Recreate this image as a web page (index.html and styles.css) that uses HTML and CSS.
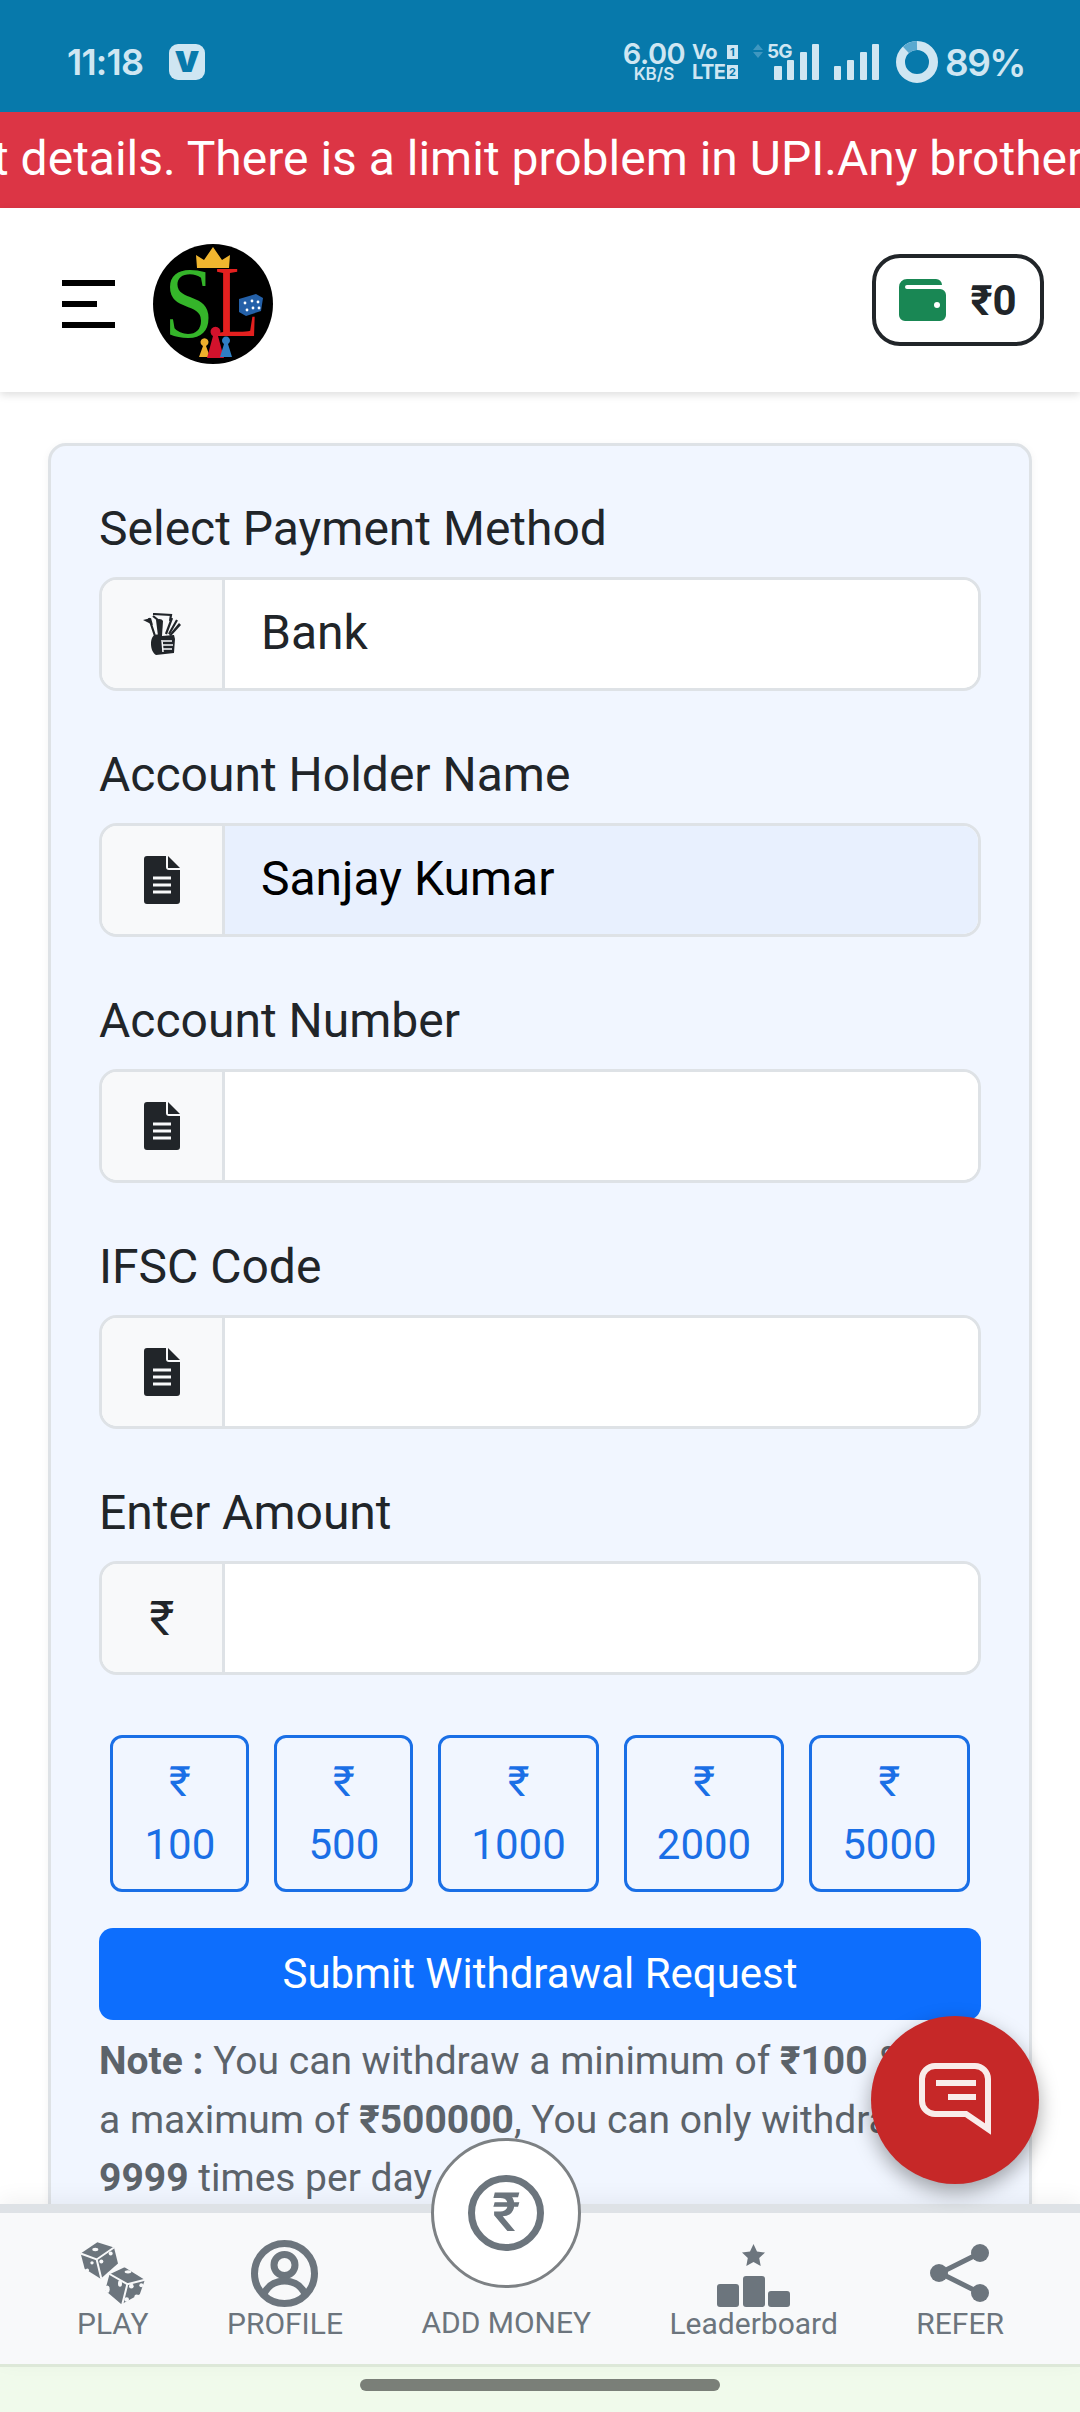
FILE: index.html
```html
<!DOCTYPE html>
<html>
<head>
<meta charset="utf-8">
<link rel="stylesheet" href="styles.css">
</head>
<body>
<div class="phone">

	<div class="status_bar">
		<span class="clock">11:18</span>
		<span class="v_badge">v</span>
		<div class="status_right">
			<div class="speed"><span class="speed_num">6.00</span><span class="speed_unit">KB/S</span></div>
			<div class="volte">
				<span class="volte_row">Vo <i class="sim">1</i></span>
				<span class="volte_row">LTE<i class="sim">2</i></span>
			</div>
			<svg class="signal" width="128" height="38" viewBox="752 43 128 38">
				<path class="dim" d="M753 50l5-6 5 6zM753 52l5 6 5-6z"/>
				<text x="767" y="58" class="five_g">5G</text>
				<rect x="774" y="66" width="8" height="14" rx="1"/>
				<rect x="787" y="60" width="7" height="20" rx="1"/>
				<rect x="800" y="52" width="7" height="28" rx="1"/>
				<rect x="812" y="44" width="7" height="36" rx="1"/>
				<rect x="834" y="66" width="7" height="14" rx="1"/>
				<rect x="847" y="60" width="7" height="20" rx="1"/>
				<rect x="860" y="52" width="7" height="28" rx="1"/>
				<rect x="872" y="44" width="7" height="36" rx="1"/>
			</svg>
			<svg class="battery" width="42" height="42" viewBox="0 0 42 42">
				<circle cx="21" cy="21" r="16.500" fill="none" stroke="#cfe6f2" stroke-width="9"/>
				<path d="M10 9A16.500 16.500 0 0 1 21 4.500" fill="none" stroke="#5aa9d0" stroke-width="9"/>
			</svg>
			<span class="batt_text">89%</span>
		</div>
	</div>

	<div class="notice"><span class="notice_text">t details. There is a limit problem in UPI.Any brother who has a problem</span></div>

	<header class="top_header">
		<div class="burger"><i class="b1"></i><i class="b2"></i><i class="b3"></i></div>
		<svg class="logo" width="120" height="120" viewBox="0 0 120 120">
			<circle cx="60" cy="60" r="60" fill="#000"/>
			<text class="logo_l" transform="translate(62 92) scale(1 1.400)">L</text>
			<text class="logo_s" transform="translate(11 94) scale(1.250 1.420)">S</text>
			<path d="M44 24l-1-13 8 5 9-13 9 13 8-5-1 13z" fill="#f1b62f"/>
			<path d="M86 55l17-5 7 4-2 13-15 5-7-4z" fill="#2460a8"/>
			<g fill="#fff"><circle cx="92" cy="59" r="1.400"/><circle cx="99" cy="57" r="1.400"/><circle cx="105" cy="58" r="1.400"/><circle cx="94" cy="66" r="1.400"/><circle cx="100" cy="64" r="1.400"/><circle cx="106" cy="64" r="1.400"/></g>
			<path d="M46 113l4-11a4 4 0 1 1 3 0l4 11z" fill="#eeb02c"/>
			<path d="M54 114l6-22a5 5 0 1 1 5 0l6 22z" fill="#d3122c"/>
			<path d="M67 113l4-13a4 4 0 1 1 4 0l4 13z" fill="#2f7fc4"/>
		</svg>
		<div class="wallet_btn">
			<svg width="47" height="42" viewBox="0 0 47 42">
				<path d="M8 0H37a6 6 0 0 1 6 6H8a2 2 0 0 0 0 4H41a6 6 0 0 1 6 6V36a6 6 0 0 1-6 6H6a6 6 0 0 1-6-6V8a8 8 0 0 1 8-8z" fill="#198754"/>
				<circle cx="38" cy="26" r="3" fill="#fff"/>
			</svg>
			<span class="wallet_amt">₹0</span>
		</div>
	</header>

	<main class="content">
		<form class="card">
			<label class="field_label">Select Payment Method</label>
			<div class="input_group">
				<span class="group_icon">
					<svg width="38" height="42" viewBox="13 13 38 42">
						<path d="M23 14l18 1-1 6M19 18l6 18M23 16l5 4M42 18l-6 16M47 20l-8 14" fill="none" stroke="#212529" stroke-width="2.200"/>
						<path d="M13 20l8-2 2 7z" fill="#212529"/>
						<path d="M26 20c3-2 6-1 7 1l-1 15h-4z" fill="#212529"/>
						<path d="M49 23l2 2-10 11-2-1z" fill="#212529"/>
						<path d="M25 35c4-1 6 0 7 1l12-1 1 4-1 14-18 2c-3-2-5-6-5-11 0-4 1-8 4-9z" fill="#212529"/>
						<path d="M32 40l1 12M33 41h9M33 45h10M33 49h9" fill="none" stroke="#f8f9fa" stroke-width="1.500"/>
					</svg>
				</span>
				<input class="group_input" type="text" value="Bank">
			</div>

			<label class="field_label">Account Holder Name</label>
			<div class="input_group">
				<span class="group_icon"><svg class="doc_icon" width="36" height="48" viewBox="0 0 36 48"><use href="#doc"/></svg></span>
				<input class="group_input filled" type="text" value="Sanjay Kumar">
			</div>

			<label class="field_label">Account Number</label>
			<div class="input_group">
				<span class="group_icon"><svg class="doc_icon" width="36" height="48" viewBox="0 0 36 48"><use href="#doc"/></svg></span>
				<input class="group_input" type="text">
			</div>

			<label class="field_label">IFSC Code</label>
			<div class="input_group">
				<span class="group_icon"><svg class="doc_icon" width="36" height="48" viewBox="0 0 36 48"><use href="#doc"/></svg></span>
				<input class="group_input" type="text">
			</div>

			<label class="field_label">Enter Amount</label>
			<div class="input_group">
				<span class="group_icon rupee">₹</span>
				<input class="group_input" type="text">
			</div>

			<div class="quick_row">
				<button type="button" class="quick_btn">₹<br>100</button>
				<button type="button" class="quick_btn">₹<br>500</button>
				<button type="button" class="quick_btn">₹<br>1000</button>
				<button type="button" class="quick_btn">₹<br>2000</button>
				<button type="button" class="quick_btn">₹<br>5000</button>
			</div>

			<button type="button" class="submit_btn">Submit Withdrawal Request</button>

			<p class="note"><b>Note :</b> You can withdraw a minimum of <b>₹100</b> &amp;<br>a maximum of <b>₹500000</b>, You can only withdraw<br><b>9999</b> times per day</p>
		</form>
	</main>

	<button type="button" class="chat_fab">
		<svg width="168" height="168" viewBox="0 0 168 168">
			<path d="M64 50H104a13 13 0 0 1 13 13V113L95 98H64a13 13 0 0 1-13-13V63a13 13 0 0 1 13-13z" fill="none" stroke="#f9ecea" stroke-width="6"/>
			<path d="M65 67H105M77 81H105" stroke="#f9ecea" stroke-width="6"/>
		</svg>
	</button>

	<nav class="bottom_nav">
		<a class="nav_item">
			<svg class="nav_icon" width="70" height="67" viewBox="170 60 210 200">
				<path d="M178 100L228 66 278 82 290 130 238 176 190 146z" fill="#6c757d"/>
				<path d="M178 100L226 118 278 82M226 118L240 176" fill="none" stroke="#f8f9fa" stroke-width="6"/>
				<path d="M248 212L262 160 310 138 374 178 358 224 300 256z" fill="#6c757d" stroke="#f8f9fa" stroke-width="6"/>
				<path d="M262 160L318 192 374 178M318 192L302 256" fill="none" stroke="#f8f9fa" stroke-width="6"/>
				<g fill="#f8f9fa">
					<ellipse cx="222" cy="88" rx="9" ry="5"/><circle cx="268" cy="100" r="6"/><circle cx="240" cy="124" r="6"/><circle cx="212" cy="128" r="5"/><circle cx="198" cy="150" r="5"/>
					<ellipse cx="320" cy="155" rx="10" ry="5"/><ellipse cx="296" cy="190" rx="6" ry="10"/><ellipse cx="258" cy="207" rx="7" ry="11"/><circle cx="330" cy="198" r="7"/><circle cx="360" cy="195" r="6"/><circle cx="316" cy="238" r="7"/><circle cx="346" cy="230" r="7"/>
				</g>
			</svg>
			<span class="nav_label">PLAY</span>
		</a>
		<a class="nav_item">
			<svg class="nav_icon" width="67" height="67" viewBox="0 0 67 67">
				<circle cx="33.500" cy="33.500" r="30" fill="none" stroke="#6c757d" stroke-width="7"/>
				<circle cx="33.500" cy="25" r="10.500" fill="none" stroke="#6c757d" stroke-width="7"/>
				<path d="M12 56c4-10 12-15 21.500-15S51 46 55 56" fill="none" stroke="#6c757d" stroke-width="7"/>
			</svg>
			<span class="nav_label">PROFILE</span>
		</a>
		<a class="nav_item">
			<span class="add_circle"><span class="add_inner">₹</span></span>
			<span class="nav_label">ADD MONEY</span>
		</a>
		<a class="nav_item">
			<svg class="nav_icon" width="73" height="67" viewBox="0 0 73 67">
				<path d="M36.500 4l3.500 7.500 8 1-5.800 5.600 1.500 8-7.200-4-7.200 4 1.500-8-5.800-5.600 8-1z" fill="#6c757d"/>
				<rect x="0" y="44" width="22" height="23" rx="3" fill="#6c757d"/>
				<rect x="26" y="36" width="22" height="31" rx="3" fill="#6c757d"/>
				<rect x="51" y="51" width="22" height="16" rx="3" fill="#6c757d"/>
			</svg>
			<span class="nav_label">Leaderboard</span>
		</a>
		<a class="nav_item">
			<svg class="nav_icon" width="60" height="67" viewBox="0 0 60 67">
				<path d="M50 13L10 33 50 53" fill="none" stroke="#6c757d" stroke-width="5"/>
				<circle cx="50" cy="13" r="9" fill="#6c757d"/>
				<circle cx="9" cy="33" r="9" fill="#6c757d"/>
				<circle cx="50" cy="53" r="9" fill="#6c757d"/>
			</svg>
			<span class="nav_label">REFER</span>
		</a>
	</nav>

	<div class="gesture_area"><span class="home_bar"></span></div>
</div>

<svg width="0" height="0" class="sprites">
	<symbol id="doc" viewBox="0 0 36 48">
		<path d="M3 0H22V11a3 3 0 0 0 3 3H36V45a3 3 0 0 1-3 3H3a3 3 0 0 1-3-3V3a3 3 0 0 1 3-3z" fill="#212529"/>
		<path d="M24 0L36 12H24z" fill="#212529"/>
		<path d="M9 22H27M9 29H27M9 36H27" stroke="#f8f9fa" stroke-width="3"/>
	</symbol>
</svg>
</body>
</html>
```
FILE: styles.css
```css
html, body {
	margin:0;
	padding:0;
	background:#fff;
}
.phone {
	position:relative;
	width:1080px;
	height:2412px;
	overflow:hidden;
	display:flex;
	flex-direction:column;
	font-family:Roboto, "Liberation Sans", sans-serif;
	color:#212529;
}
.sprites {
	position:absolute;
}

/* status bar */
.status_bar {
	flex:none;
	height:112px;
	background:#0779ab;
	color:#cfe6f2;
	display:flex;
	align-items:center;
	padding:12px 55px 0 67px;
	box-sizing:border-box;
	font-family:Inter, "Noto Sans", sans-serif;
}
.clock {
	font-size:36px;
	font-weight:600;
	letter-spacing:-.8px;
	width:102px;
}
.v_badge {
	width:36px;
	height:36px;
	border-radius:9px;
	background:#cfe6f2;
	color:#0779ab;
	font-size:38px;
	font-weight:900;
	line-height:29px;
	text-align:center;
}
.status_right {
	margin-left:auto;
	display:flex;
	align-items:center;
}
.speed {
	display:flex;
	flex-direction:column;
	align-items:center;
	width:62px;
	font-weight:600;
}
.speed_num {
	font-size:29px;
	line-height:24px;
	letter-spacing:-.5px;
}
.speed_unit {
	font-size:17px;
	line-height:15px;
	margin-top:1px;
}
.volte {
	display:flex;
	flex-direction:column;
	margin-left:7px;
	font-size:20px;
	font-weight:700;
	line-height:20px;
	width:60px;
	letter-spacing:-.5px;
}
.volte_row {
	display:flex;
	justify-content:space-between;
	width:46px;
}
.sim {
	width:11px;
	height:14px;
	margin-top:3px;
	background:#cfe6f2;
	color:#0779ab;
	font-size:11px;
	font-style:normal;
	line-height:14px;
	text-align:center;
	letter-spacing:0;
}
.signal {
	fill:#cfe6f2;
	margin-right:16px;
	overflow:visible;
}
.signal .dim {
	fill:#3f97c0;
}
.five_g {
	font-size:19px;
	font-weight:700;
	letter-spacing:-1px;
}
.batt_text {
	font-size:37px;
	font-weight:600;
	margin-left:7px;
	letter-spacing:-1.500px;
}

/* red marquee */
.notice {
	flex:none;
	height:96px;
	background:#dc3545;
	color:#fff;
	overflow:hidden;
	white-space:nowrap;
	font-size:48px;
	line-height:94px;
}
.notice_text {
	display:inline-block;
	margin-left:-7px;
}

/* header */
.top_header {
	flex:none;
	height:184px;
	box-sizing:border-box;
	background:#fff;
	display:flex;
	align-items:center;
	padding:0 36px 0 62px;
	box-shadow:0 3px 8px rgba(0, 0, 0, .13);
	position:relative;
}
.burger {
	display:flex;
	flex-direction:column;
	gap:15px;
	width:53px;
	margin-top:8px;
}
.burger i {
	display:block;
	height:6px;
	background:#000;
}
.b1, .b3 {
	width:53px;
}
.b2 {
	width:35px;
}
.logo {
	margin-left:38px;
	margin-top:8px;
}
.logo_s {
	font-family:"Liberation Serif", serif;
	font-size:72px;
	fill:#35b52a;
}
.logo_l {
	font-family:"Liberation Serif", serif;
	font-size:72px;
	fill:#e3201f;
}
.wallet_btn {
	margin-left:auto;
	width:172px;
	height:92px;
	box-sizing:border-box;
	border:4px solid #212529;
	border-radius:28px;
	display:flex;
	align-items:center;
	justify-content:center;
	gap:24px;
}
.wallet_amt {
	font-size:42px;
	font-weight:700;
}

/* form card */
.content {
	flex:1;
	min-height:0;
	overflow:hidden;
	padding:51px 48px 0;
}
.card {
	display:block;
	background:#f1f6ff;
	border:3px solid #dee2e6;
	border-radius:18px;
	padding:47px 48px 80px;
	box-shadow:0 2px 8px rgba(0, 0, 0, .05);
}
.field_label {
	display:block;
	font-size:48px;
	line-height:72px;
	margin-bottom:12px;
}
.input_group {
	display:flex;
	height:114px;
	box-sizing:border-box;
	border:3px solid #dee2e6;
	border-radius:18px;
	overflow:hidden;
	margin-bottom:48px;
	background:#fff;
}
.group_icon {
	flex:none;
	width:120px;
	background:#f8f9fa;
	border-right:3px solid #dee2e6;
	display:flex;
	align-items:center;
	justify-content:center;
}
.rupee {
	font-size:48px;
}
.group_input {
	flex:1;
	min-width:0;
	border:0;
	outline:0;
	padding:0 36px 3px;
	font-family:inherit;
	font-size:48px;
	color:#212529;
	background:#fff;
}
.group_input.filled {
	background:#e8f0fe;
	color:#000;
}
.quick_row {
	display:flex;
	justify-content:center;
	gap:25px;
	margin-top:60px;
}
.quick_btn {
	box-sizing:border-box;
	min-width:139px;
	padding:10px 30px 12px;
	height:157px;
	background:transparent;
	border:3px solid #1a6fe6;
	border-radius:12px;
	color:#1a6fe6;
	font-family:inherit;
	font-size:42px;
	line-height:63px;
}
.submit_btn {
	display:block;
	width:100%;
	height:92px;
	margin-top:36px;
	padding-bottom:3px;
	background:#0d6efd;
	border:0;
	border-radius:14px;
	color:#fff;
	font-family:inherit;
	font-size:42px;
}
.note {
	margin:12px 0 0;
	font-size:39px;
	line-height:58.500px;
	color:#5c636a;
}

/* floating chat */
.chat_fab {
	position:absolute;
	left:871px;
	top:2016px;
	width:168px;
	height:168px;
	padding:0;
	border:0;
	border-radius:50%;
	background:#c62828;
	box-shadow:0 8px 20px rgba(0, 0, 0, .35);
	z-index:3;
}

/* bottom nav */
.bottom_nav {
	flex:none;
	height:163px;
	box-sizing:border-box;
	background:#f8f9fa;
	border-top:9px solid #dee2e6;
	border-bottom:3px solid #dde8d8;
	padding:27px 76px 0 77px;
	display:flex;
	justify-content:space-between;
	position:relative;
	box-shadow:0 -6px 20px rgba(0, 0, 0, .05);
	z-index:2;
}
.nav_item {
	display:flex;
	flex-direction:column;
	align-items:center;
	color:#6c757d;
}
.nav_icon {
	display:block;
	height:67px;
}
.nav_label {
	font-size:30px;
	line-height:34px;
}
.add_circle {
	width:150px;
	height:150px;
	box-sizing:border-box;
	margin:-102px 0 18px;
	border:3px solid #7d8184;
	border-radius:50%;
	background:#fff;
	display:flex;
	align-items:center;
	justify-content:center;
}
.add_inner {
	width:76px;
	height:76px;
	box-sizing:border-box;
	border:7px solid #6c757d;
	border-radius:50%;
	font-size:54px;
	font-weight:500;
	line-height:62px;
	text-align:center;
}
.gesture_area {
	flex:none;
	height:45px;
	background:#f0faeb;
	display:flex;
	justify-content:center;
	padding-top:12px;
	box-sizing:border-box;
}
.home_bar {
	width:360px;
	height:12px;
	border-radius:6px;
	background:#7a7f78;
}
```
